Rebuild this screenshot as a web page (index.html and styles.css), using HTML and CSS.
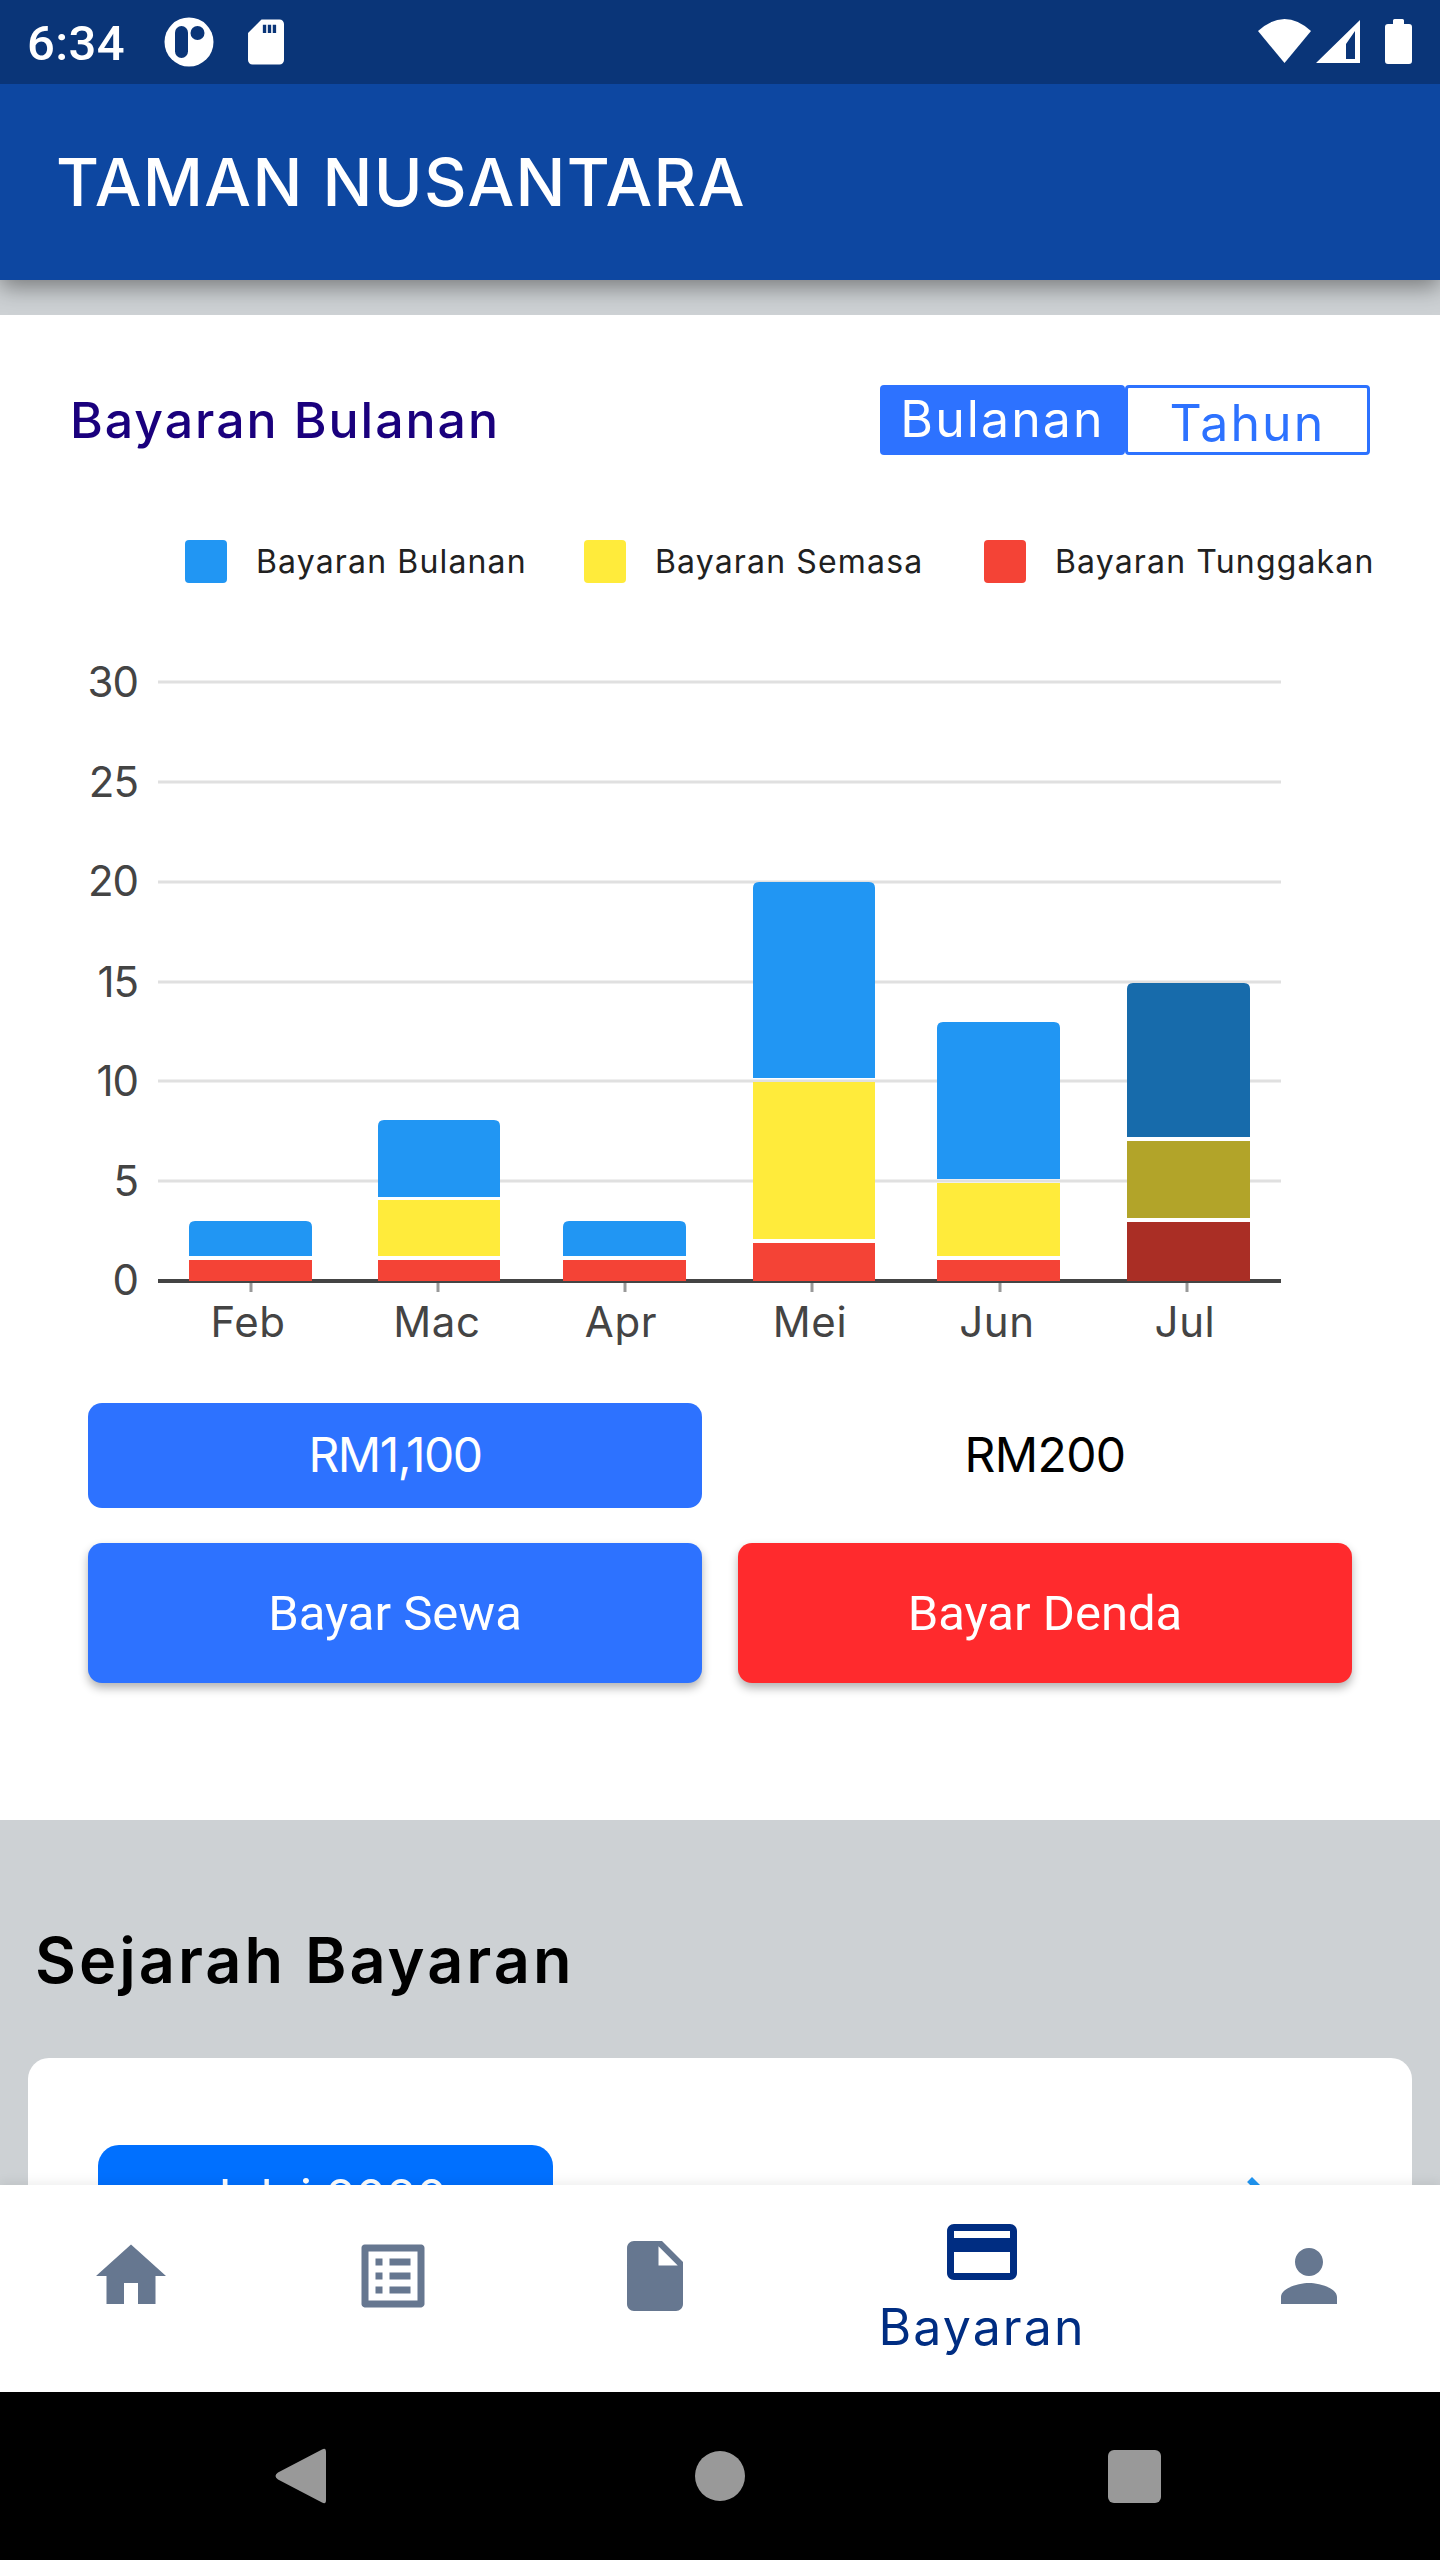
FILE: index.html
```html
<!DOCTYPE html>
<html lang="ms">
<head>
<meta charset="utf-8">
<title>Taman Nusantara</title>
<link rel="stylesheet" href="styles.css">
</head>
<body>
<div class="screen">
  <header class="status">
    <span class="time">6:34</span>
    <svg class="st-o" viewBox="0 0 50 50"><circle cx="25" cy="25" r="24.5" fill="#fff"/><rect x="11" y="9" width="13" height="32" rx="6.5" fill="#0a3578"/><circle cx="33.500" cy="16" r="7" fill="#0a3578"/></svg>
    <svg class="st-sd" viewBox="0 0 24 24"><path fill="#fff" fill-rule="evenodd" d="M18 2h-8L4.020 8 4 20c0 1.100.9 2 2 2h12c1.100 0 2-.9 2-2V4c0-1.100-.9-2-2-2zM12.100 8h-1.500V4.300h1.500zM14.300 8h-1.500V4.300h1.500zM16.500 8H15V4.300h1.500z"/></svg>
    <span class="st-space"></span>
    <svg class="st-right" viewBox="1258 19 154 45"><path fill="#fff" d="M1258 31Q1284.500 7 1311 31L1284.500 63Z"/><path fill="#fff" fill-rule="evenodd" d="M1360 20V63H1316ZM1355 31L1346 44V59H1355Z"/><path fill="#fff" d="M1393 24V20.500Q1393 19 1394.500 19H1402.500Q1404 19 1404 20.500V24H1409Q1412 24 1412 27V61Q1412 64 1409 64H1388Q1385 64 1385 61V27Q1385 24 1388 24Z"/></svg>
  </header>
  <div class="appbar"><h1 class="app-title">TAMAN NUSANTARA</h1></div>

  <main class="content">
    <section class="panel">
      <div class="panel-head">
        <h2 class="panel-title">Bayaran Bulanan</h2>
        <div class="toggle">
          <span class="toggle-btn toggle-on">Bulanan</span>
          <span class="toggle-btn toggle-off">Tahun</span>
        </div>
      </div>
      <div class="legend">
        <span class="swatch sw-blue"></span><span class="leg leg-1">Bayaran Bulanan</span>
        <span class="swatch sw-yellow"></span><span class="leg leg-2">Bayaran Semasa</span>
        <span class="swatch sw-red"></span><span class="leg leg-3">Bayaran Tunggakan</span>
      </div>
      <svg class="chart" viewBox="0 583 1440 820">
        <g class="grid">
          <line x1="158" x2="1281" y1="682" y2="682"/><line x1="158" x2="1281" y1="782" y2="782"/><line x1="158" x2="1281" y1="882" y2="882"/><line x1="158" x2="1281" y1="982" y2="982"/><line x1="158" x2="1281" y1="1081" y2="1081"/><line x1="158" x2="1281" y1="1181" y2="1181"/>
        </g>
        <g class="ticks">
          <line x1="251" x2="251" y1="1281" y2="1292"/><line x1="438" x2="438" y1="1281" y2="1292"/><line x1="625" x2="625" y1="1281" y2="1292"/><line x1="812" x2="812" y1="1281" y2="1292"/><line x1="1000" x2="1000" y1="1281" y2="1292"/><line x1="1187" x2="1187" y1="1281" y2="1292"/>
        </g>
        <line class="axis" x1="158" x2="1281" y1="1281" y2="1281"/>
        <g class="bars">
          <path class="c-blue" d="M189 1256V1227q0-6 6-6h111q6 0 6 6v29z"/><rect class="c-red" x="189" y="1260" width="123" height="21"/>
          <path class="c-blue" d="M378 1197V1126q0-6 6-6h110q6 0 6 6v71z"/><rect class="c-yellow" x="378" y="1200" width="122" height="56"/><rect class="c-red" x="378" y="1260" width="122" height="21"/>
          <path class="c-blue" d="M563 1256V1227q0-6 6-6h111q6 0 6 6v29z"/><rect class="c-red" x="563" y="1260" width="123" height="21"/>
          <path class="c-blue" d="M753 1078V888q0-6 6-6h110q6 0 6 6v190z"/><rect class="c-yellow" x="753" y="1082" width="122" height="157"/><rect class="c-red" x="753" y="1243" width="122" height="38"/>
          <path class="c-blue" d="M937 1179V1028q0-6 6-6h111q6 0 6 6v151z"/><rect class="c-yellow" x="937" y="1183" width="123" height="73"/><rect class="c-red" x="937" y="1260" width="123" height="21"/>
          <path class="c-blue-d" d="M1127 1137V989q0-6 6-6h111q6 0 6 6v148z"/><rect class="c-yellow-d" x="1127" y="1141" width="123" height="77"/><rect class="c-red-d" x="1127" y="1222" width="123" height="59"/>
        </g>
        <g class="y-lab">
          <text x="138" y="697">30</text><text x="138" y="797">25</text><text x="138" y="896">20</text><text x="138" y="997">15</text><text x="138" y="1096">10</text><text x="138" y="1196">5</text><text x="138" y="1295">0</text>
        </g>
        <g class="x-lab">
          <text x="248" y="1337">Feb</text><text x="437" y="1337">Mac</text><text x="621" y="1337">Apr</text><text x="810" y="1337">Mei</text><text x="997" y="1337">Jun</text><text x="1185" y="1337">Jul</text>
        </g>
      </svg>
      <div class="amounts">
        <div class="amount amount-blue">RM1,100</div>
        <div class="amount amount-plain">RM200</div>
      </div>
      <div class="actions">
        <button class="act act-blue">Bayar Sewa</button>
        <button class="act act-red">Bayar Denda</button>
      </div>
    </section>

    <section class="history">
      <h2 class="history-title">Sejarah Bayaran</h2>
      <div class="hist-card">
        <div class="hist-pill">Julai 2020</div>
        <svg class="hist-chev" viewBox="0 0 24 24"><path d="M10 6L8.590 7.410 13.170 12l-4.580 4.590L10 18l6-6z"/></svg>
      </div>
    </section>
  </main>

  <nav class="tabs">
    <div class="tab"><svg class="tab-ico" viewBox="0 0 24 24"><path d="M10 20v-6h4v6h5v-8h3L12 3 2 12h3v8z"/></svg></div>
    <div class="tab"><svg class="tab-ico" viewBox="0 0 24 24"><path d="M19 5v14H5V5h14m1.100-2H3.900c-.5 0-.9.4-.9.9v16.200c0 .4.4.9.9.9h16.200c.4 0 .9-.5.9-.9V3.900c0-.5-.5-.9-.9-.9zM11 7h6v2h-6V7zm0 4h6v2h-6v-2zm0 4h6v2h-6zM7 7h2v2H7zm0 4h2v2H7zm0 4h2v2H7z"/></svg></div>
    <div class="tab"><svg class="tab-ico" viewBox="0 0 24 24"><path d="M6 2c-1.100 0-1.990.9-1.990 2L4 20c0 1.100.89 2 1.990 2H18c1.100 0 2-.9 2-2V8l-6-6H6zm7 7V3.500L18.500 9H13z"/></svg></div>
    <div class="tab tab-active"><svg class="tab-ico" viewBox="0 0 24 24"><path d="M20 4H4c-1.110 0-1.990.89-1.990 2L2 18c0 1.110.89 2 2 2h16c1.110 0 2-.89 2-2V6c0-1.110-.89-2-2-2zm0 14H4v-6h16v6zm0-10H4V6h16v2z"/></svg><span class="tab-label">Bayaran</span></div>
    <div class="tab"><svg class="tab-ico" viewBox="0 0 24 24"><path d="M12 12c2.210 0 4-1.790 4-4s-1.790-4-4-4-4 1.790-4 4 1.790 4 4 4zm0 2c-2.670 0-8 1.340-8 4v2h16v-2c0-2.660-5.330-4-8-4z"/></svg></div>
  </nav>

  <footer class="sysnav">
    <svg class="sys-back" viewBox="0 0 51 56"><path d="M47 1.500Q51-1 51 4V52q0 5-4 2.500L3 31.500q-5-3.500 0-7z"/></svg>
    <svg class="sys-home" viewBox="0 0 50 50"><circle cx="25" cy="25" r="25"/></svg>
    <svg class="sys-recent" viewBox="0 0 53 53"><rect width="53" height="53" rx="6"/></svg>
  </footer>
</div>
</body>
</html>
```

FILE: styles.css
```css
* { box-sizing: border-box; }
html, body { margin: 0; padding: 0; }
body { font-family: Inter, "Noto Sans", sans-serif; background: #cdd1d4; }
h1, h2 { margin: 0; }
.screen { width: 1440px; height: 2560px; display: flex; flex-direction: column; overflow: hidden; background: #cdd1d4; }

.status { flex: 0 0 84px; height: 84px; background: #0a3578; display: flex; align-items: flex-start; padding-left: 27px; position: relative; z-index: 3; }
.time { font-family: Roboto, sans-serif; font-weight: 500; font-size: 49px; line-height: 49px; letter-spacing: .4px; color: #fff; margin-top: 19px; width: 137px; }
.st-o { width: 50px; height: 50px; margin-top: 17px; }
.st-sd { width: 54px; height: 54px; margin-top: 15px; margin-left: 25px; }
.st-space { flex: 1; }
.st-right { width: 154px; height: 45px; margin-top: 19px; margin-right: 28px; }

.appbar { flex: 0 0 196px; background: #0d47a1; display: flex; align-items: center; padding-left: 56px; box-shadow: 0 7px 22px rgba(0,0,0,.42); position: relative; z-index: 2; }
.app-title { font-size: 66px; font-weight: 500; color: #fff; line-height: 1; letter-spacing: 1.3px; }

.content { flex: 1; min-height: 0; overflow: hidden; padding-top: 35px; }
.panel { height: 1505px; background: #fff; padding-top: 70px; }
.panel-head { display: flex; justify-content: space-between; align-items: flex-start; padding: 0 70px 0 70px; }
.panel-title { font-size: 50px; font-weight: 500; line-height: 70px; letter-spacing: 1.95px; color: #1a007d; }
.toggle { display: flex; height: 70px; }
.toggle-btn { height: 70px; font-size: 50px; border-radius: 4px; display: flex; justify-content: center; letter-spacing: 2.1px; }
.toggle-on { width: 245px; background: #2d72ff; color: #fff; line-height: 68px; }
.toggle-off { width: 245px; border: 3px solid #2d72ff; color: #2d72ff; line-height: 70px; }

.legend { display: flex; align-items: center; height: 43px; margin-top: 85px; padding-left: 185px; }
.swatch { width: 42px; height: 43px; border-radius: 4px; flex: none; }
.sw-blue { background: #2196f3; }
.sw-yellow { background: #ffeb3b; }
.sw-red { background: #f44336; }
.leg { font-size: 32px; color: #212121; margin-left: 29px; white-space: nowrap; line-height: 43px; letter-spacing: 1.15px; flex: none; }
.leg-1 { width: 328px; }
.leg-2 { width: 329px; }
.leg-3 { width: 320px; }

.chart { display: block; width: 1440px; height: 820px; }
.grid line { stroke: #e0e0e0; stroke-width: 3; }
.ticks line { stroke: #999; stroke-width: 3; }
.axis { stroke: #444; stroke-width: 4; }
.c-blue { fill: #2196f3; }
.c-yellow { fill: #ffeb3b; }
.c-red { fill: #f44336; }
.c-blue-d { fill: #176bab; }
.c-yellow-d { fill: #b2a429; }
.c-red-d { fill: #aa2e25; }
.y-lab text { font-size: 42px; fill: #444; text-anchor: end; letter-spacing: -1px; }
.x-lab text { font-size: 42px; fill: #444; text-anchor: middle; letter-spacing: .6px; }

.amounts, .actions { display: grid; grid-template-columns: 614px 614px; column-gap: 36px; padding-left: 88px; }
.amount { height: 105px; border-radius: 14px; display: flex; align-items: center; justify-content: center; font-size: 48px; color: #000; padding-bottom: 3px; }
.amount-blue { background: #2d72ff; color: #fff; letter-spacing: -1.5px; }
.amount-plain { letter-spacing: -.6px; }
.actions { margin-top: 35px; }
.act { height: 140px; border: 0; padding: 0; border-radius: 14px; font-family: Roboto, sans-serif; font-size: 49px; color: #fff; box-shadow: 0 5px 10px rgba(0,0,0,.3); }
.act-blue { background: #2d72ff; }
.act-red { background: #ff2a2d; }

.history { padding: 0 28px; }
.history-title { font-size: 63px; font-weight: 600; line-height: 80px; letter-spacing: 3px; color: #000; padding: 100px 0 0 7px; height: 238px; }
.hist-card { height: 400px; background: #fff; border-radius: 21px; padding: 87px 111px 0 70px; display: flex; justify-content: space-between; align-items: flex-start; }
.hist-pill { width: 455px; height: 105px; background: #0070ff; border-radius: 21px; color: #fff; font-size: 49px; display: flex; align-items: center; justify-content: center; }
.hist-chev { width: 84px; height: 84px; margin-top: 11px; fill: #2196f3; }

.tabs { flex: 0 0 207px; background: #fff; display: flex; position: relative; z-index: 2; box-shadow: 0 -4px 10px rgba(0,0,0,.06); }
.tab { flex: 0 0 262px; display: flex; flex-direction: column; align-items: center; padding-top: 49px; }
.tab-active { flex-basis: 392px; padding-top: 25px; }
.tab-ico { width: 84px; height: 84px; fill: #667790; display: block; }
.tab-active .tab-ico { fill: #002d82; }
.tab-label { font-size: 50px; line-height: 60px; letter-spacing: 2.1px; color: #002d82; margin-top: 3px; }

.sysnav { flex: 0 0 168px; background: #000; display: flex; align-items: center; padding-left: 275px; }
.sys-back { width: 51px; height: 56px; fill: #999; }
.sys-home { width: 50px; height: 50px; margin-left: 369px; fill: #999; }
.sys-recent { width: 53px; height: 53px; margin-left: 363px; fill: #999; }
```
